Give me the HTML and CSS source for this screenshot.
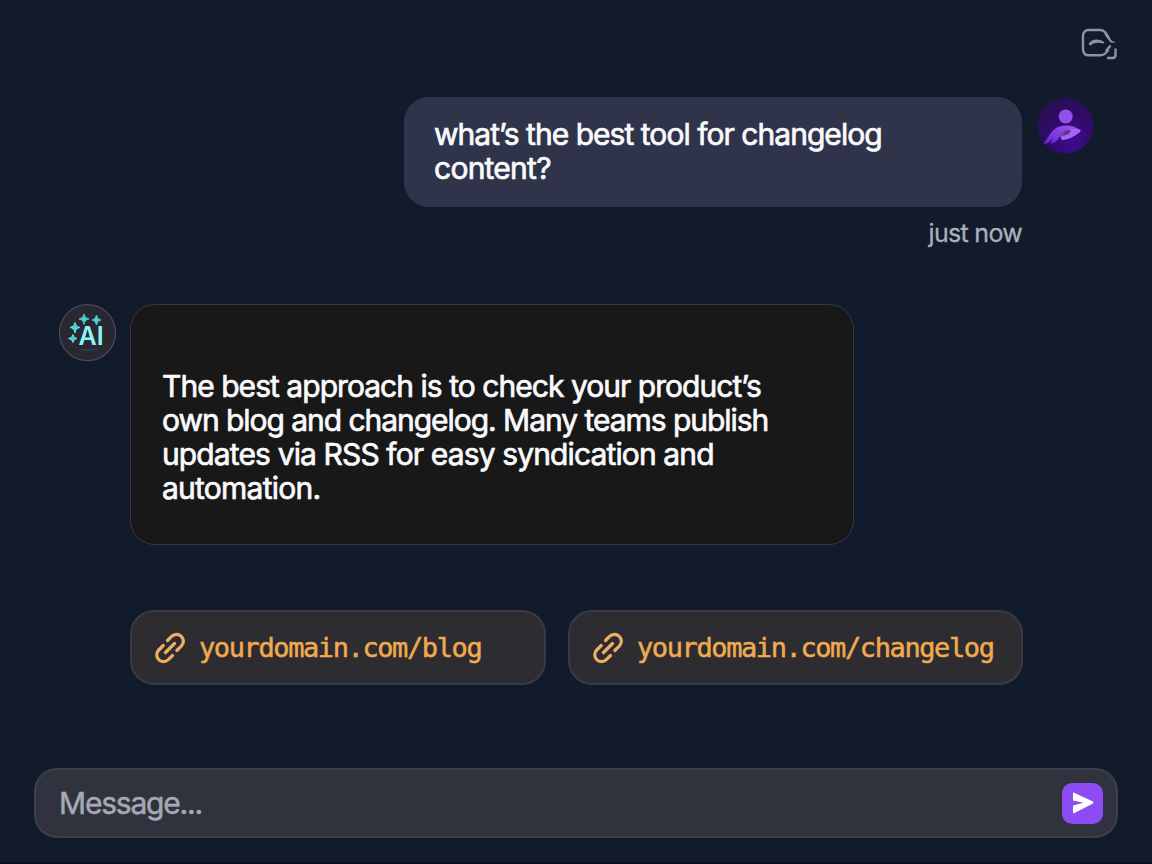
FILE: index.html
```html
<!DOCTYPE html>
<html lang="en">
<head>
    <meta charset="UTF-8">
    <meta name="viewport" content="width=device-width, initial-scale=1.0">
    <title>Chat</title>
    <link rel="stylesheet" href="styles.css">
</head>
<body>
    <header class="topbar">
        <svg class="share-icon" width="38" height="34" viewBox="0 0 38 34" fill="none" stroke="#8d93a4" stroke-width="2.4">
            <path d="M29.500 22.500 L26.800 26 Q24.500 28.300 21.500 28.300 H10 Q4 28.300 4 22.300 V9 Q4 3 10 3 H21 Q24.300 3 26.300 5.300 L30.500 12"/>
            <path d="M24 3.500 L33 13.800 L37 15.800 L31.500 15.500 L26.500 9 Z" fill="#8d93a4" stroke="none"/>
            <path d="M10.500 17 C13 12.800 20 11.800 25 15.800 C20 14.500 15 14.500 11.500 17.500 Z" fill="#8d93a4" stroke-width="1.500"/>
            <path d="M27 24 L31.500 18.500"/>
            <path d="M36.500 21.500 V28 Q36.500 31 33.500 31 H28"/>
        </svg>
    </header>

    <main class="chat">
        <div class="message user">
            <div class="message-body">
                <div class="bubble user-bubble"><span class="snug">what’s the best tool for changelog</span><br>content?</div>
                <div class="time">just now</div>
            </div>
            <svg class="avatar" width="57" height="57" viewBox="0 0 57 57">
                <defs>
                    <radialGradient id="userBg" cx="0.6" cy="0.75" r="0.8">
                        <stop offset="0" stop-color="#3d0c91"/>
                        <stop offset="0.55" stop-color="#300b68"/>
                        <stop offset="1" stop-color="#27104d"/>
                    </radialGradient>
                    <linearGradient id="arm" x1="0" y1="1" x2="1" y2="0">
                        <stop offset="0" stop-color="#6825cc"/>
                        <stop offset="1" stop-color="#9d58f2"/>
                    </linearGradient>
                </defs>
                <circle cx="28.500" cy="28.500" r="28" fill="url(#userBg)"/>
                <circle cx="28.700" cy="19.500" r="7" fill="#9151ee"/>
                <path d="M6.500 47 C12 40 15 29 28 28.500 C34 28 39 30 43 33 L39 35 C31 32 27 34 24 38 C21 43 17 47 13.500 46.500 L16 41 C13 44 10 47 6.500 47 Z" fill="url(#arm)"/>
                <path d="M24 39 C27 33 32 31 43 32.500 Q44.500 33 42.500 35.500 C37 40 31 42.500 26 43 Q23 42.500 24 39 Z" fill="#a464f3"/>
                <path d="M25 38.500 C27 33 31 32.500 34 33.500 C33 37 28 39.500 25 38.500 Z" fill="#5b3c83"/>
            </svg>
        </div>

        <div class="message ai">
            <svg class="avatar" width="58" height="58" viewBox="0 0 58 58">
                <defs>
                    <linearGradient id="spark" x1="0" y1="1" x2="1" y2="0">
                        <stop offset="0" stop-color="#65e9f0"/>
                        <stop offset="1" stop-color="#39b9b4"/>
                    </linearGradient>
                </defs>
                <circle cx="28.500" cy="28.700" r="28" fill="#292831" stroke="#484a5a" stroke-width="1.300"/>
                <ellipse cx="29" cy="46" rx="10" ry="1.500" fill="#234552" opacity="0.7"/>
                <g fill="url(#spark)">
                    <path d="M25 10 Q25.500 14.500 30 15 Q25.500 15.500 25 20.500 Q24.500 15.500 20 15 Q24.500 14.500 25 10 Z" stroke="#4acbc9"/>
                    <path d="M37.500 11 Q38 15.500 42 16 Q38 16.500 37.500 21 Q37 16.500 33 16 Q37 15.500 37.500 11 Z" stroke="#4acbc9"/>
                    <path d="M16 18.500 Q16.500 23 21 23.500 Q16.500 24 16 29 Q15.500 24 11 23.500 Q15.500 23 16 18.500 Z" stroke="#5ce5ec"/>
                    <path d="M14 30.500 Q14.500 34 18 34.500 Q14.500 35 14 38.500 Q13.500 35 9.500 34.500 Q13.500 34 14 30.500 Z" stroke="#5ce5ec"/>
                </g>
                <text class="ai-label" x="19.500" y="41">AI</text>
            </svg>
            <div class="bubble ai-bubble"><span class="snug">The best approach is to check your product’s</span><br><span class="tight">own blog and changelog. Many teams publish</span><br><span class="close">updates via RSS for easy syndication and</span><br>automation.</div>
        </div>

        <div class="links">
            <a class="link-chip">
                <svg class="link-icon" width="32" height="32" viewBox="0 0 32 32">
                    <path d="M13.500 8.500 L17.600 4.400 A6.700 6.700 0 0 1 27.400 14 L22.800 18.500"/>
                    <path d="M18.500 23.500 L14.300 27.600 A6.700 6.700 0 0 1 4.700 18 L9.300 13.500"/>
                    <path d="M11.500 20.500 L20.500 11.500"/>
                </svg>
                <span>yourdomain.com/blog</span>
            </a>
            <a class="link-chip wide">
                <svg class="link-icon" width="32" height="32" viewBox="0 0 32 32">
                    <path d="M13.500 8.500 L17.600 4.400 A6.700 6.700 0 0 1 27.400 14 L22.800 18.500"/>
                    <path d="M18.500 23.500 L14.300 27.600 A6.700 6.700 0 0 1 4.700 18 L9.300 13.500"/>
                    <path d="M11.500 20.500 L20.500 11.500"/>
                </svg>
                <span>yourdomain.com/changelog</span>
            </a>
        </div>
    </main>

    <div class="composer">
        <span class="placeholder">Message...</span>
        <button class="send" aria-label="Send">
            <svg width="22" height="22" viewBox="0 0 22 22">
                <path d="M1 1.300 Q1 0.300 2 0.700 L20.500 9.300 Q22.300 10.500 20.500 11.700 L2 21.200 Q1 21.500 1 20.500 V13.500 L11.500 10.700 L1 8.500 Z" fill="#fff"/>
            </svg>
        </button>
    </div>
</body>
</html>
```
FILE: styles.css
```css
* {
    margin: 0;
    padding: 0;
    box-sizing: border-box;
}

body {
    display: flex;
    flex-direction: column;
    height: 864px;
    overflow: hidden;
    padding: 27px 34px 24px;
    background-color: #111b2b;
    border-bottom: 2px solid #0b1020;
    font-family: Inter, "Liberation Sans", sans-serif;
    color: #fafafc;
}

.topbar {
    display: flex;
    justify-content: flex-end;
    height: 70px;
}

.share-icon {
    display: block;
    margin-right: 1px;
}

.chat {
    flex: 1;
    padding-left: 25px;
}

.message {
    display: flex;
    align-items: flex-start;
}

.message.user {
    justify-content: flex-end;
    gap: 15px;
    height: 207px;
    padding-right: 24px;
}

.message.ai {
    gap: 13px;
    height: 306px;
}

.avatar {
    display: block;
    flex-shrink: 0;
}

.bubble {
    font-size: 30px;
    line-height: 34px;
    letter-spacing: -0.75px;
    white-space: nowrap;
    -webkit-text-stroke: 0.7px currentColor;
}

.user-bubble {
    width: 618px;
    height: 110px;
    padding: 20px 30px;
    border-radius: 25px;
    background: #30344b;
}

.ai-bubble {
    width: 724px;
    height: 241px;
    padding: 64px 31px 0;
    border: 1.5px solid #39393b;
    border-radius: 25px;
    background: #181819;
}

.close {
    letter-spacing: -0.87px;
}

.snug {
    letter-spacing: -0.96px;
}

.tight {
    letter-spacing: -1.04px;
}

.time {
    margin-top: 10px;
    font-size: 25px;
    line-height: 32px;
    letter-spacing: -0.7px;
    text-align: right;
    color: #acb0bb;
    -webkit-text-stroke: 0.3px currentColor;
}

.ai-label {
    font-size: 25px;
    font-weight: 600;
    fill: #8af5f6;
}

.links {
    display: flex;
    gap: 22px;
    padding-left: 71px;
}

.link-chip {
    display: flex;
    align-items: center;
    gap: 13px;
    width: 416px;
    height: 75px;
    padding-left: 22px;
    border: 2px solid #393a42;
    border-radius: 24px;
    background: #2d2c30;
    font-family: "DejaVu Sans Mono", monospace;
    font-size: 27px;
    letter-spacing: -1.4px;
    color: #f0aa50;
    white-space: nowrap;
    -webkit-text-stroke: 0.5px currentColor;
}

.link-chip.wide {
    width: 455px;
}

.link-icon {
    flex-shrink: 0;
    fill: none;
    stroke: #f1ad65;
    stroke-width: 3.2;
    stroke-linecap: round;
}

.composer {
    display: flex;
    align-items: center;
    justify-content: space-between;
    height: 70px;
    padding: 0 13px 0 23px;
    border: 2px solid #3b404b;
    border-radius: 23px;
    background: #30333d;
}

.placeholder {
    font-size: 30px;
    letter-spacing: -1.2px;
    color: #a4a9b4;
    -webkit-text-stroke: 0.5px currentColor;
}

.send {
    display: flex;
    align-items: center;
    justify-content: center;
    width: 41px;
    height: 41px;
    border: none;
    border-radius: 10px;
    background: #8d4bf4;
}
```
